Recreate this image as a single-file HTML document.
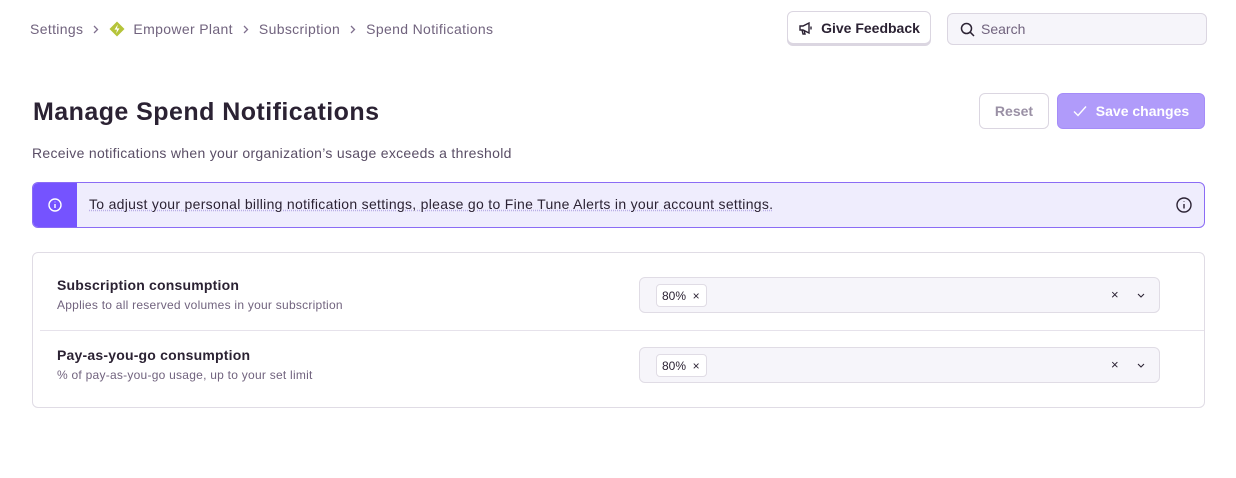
<!DOCTYPE html>
<html><head><style>
*{box-sizing:border-box;margin:0;padding:0}
body{width:1236px;height:478px;background:#fff;font-family:"Liberation Sans",sans-serif;color:#2b2233;position:relative;overflow:hidden}
.abs{position:absolute}
.bc{left:30px;top:20px;font-size:14px;color:#71637e;display:flex;align-items:center;height:18px;letter-spacing:0.35px}
.bc svg.c{margin:0 10px}
.btn{position:absolute;border:1px solid #dbd6e1;border-radius:6px;background:#fff;display:flex;align-items:center;justify-content:center;font-size:14px;font-weight:bold}
.sel{position:absolute;left:639px;width:521px;height:36px;border:1px solid #e0dce5;border-radius:6px;background:#f6f5fa}
.chip{position:absolute;left:16px;top:6px;width:51px;height:23px;border:1px solid #e0dce5;border-radius:4px;background:#fff;font-size:12px;padding:4px 0 0 5px;color:#2b2233}
.lbl{position:absolute;left:57px;font-size:14px;font-weight:bold;color:#2b2233;letter-spacing:0.2px}
.sub{position:absolute;left:57px;font-size:12px;color:#71637e;letter-spacing:0.25px}
</style></head><body>
<div class="abs bc">Settings<svg class="c" width="6" height="9" viewBox="0 0 6 9" fill="none" stroke="#80708f" stroke-width="1.3"><path d="M1 1l3.5 3.5L1 8"/></svg>
<svg width="16" height="16" viewBox="0 0 16 16" style="margin-right:8px"><path d="M8 0.5L15.5 8L8 15.5L0.5 8Z" fill="#b5c43a"/><path d="M8.8 3.5L5.5 8.6H8L7.2 12.5L10.5 7.4H8Z" fill="#fff"/></svg>Empower Plant<svg class="c" width="6" height="9" viewBox="0 0 6 9" fill="none" stroke="#80708f" stroke-width="1.3"><path d="M1 1l3.5 3.5L1 8"/></svg>Subscription<svg class="c" width="6" height="9" viewBox="0 0 6 9" fill="none" stroke="#80708f" stroke-width="1.3"><path d="M1 1l3.5 3.5L1 8"/></svg>Spend Notifications</div>

<div class="btn" style="left:787px;top:11px;width:144px;height:33px;box-shadow:0 2px 0 #dbd6e1;color:#2b2233">
<svg width="16" height="16" viewBox="0 0 16 16" style="margin-right:7px" fill="none" stroke="#2b2233" stroke-width="1.4"><path d="M2 6h3l6-3v10l-6-3H2z"/><path d="M4 10l1 4h2l-1-4"/><path d="M13 6.5v3"/></svg>Give Feedback</div>
<div class="abs" style="left:947px;top:13px;width:260px;height:32px;border:1px solid #dbd6e1;border-radius:6px;background:#f6f5fa;font-size:14px;color:#71637e;padding:7px 0 0 33px">Search
<svg class="abs" style="left:12px;top:8px" width="15" height="15" viewBox="0 0 15 15" fill="none" stroke="#2b2233" stroke-width="1.5"><circle cx="6.5" cy="6.5" r="5"/><path d="M10.2 10.2L14 14"/></svg></div>

<div class="abs" style="left:33px;top:98px;font-size:25px;font-weight:bold;color:#2b2233;letter-spacing:0.45px">Manage Spend Notifications</div>
<div class="btn" style="left:979px;top:93px;width:70px;height:36px;color:#9a90a5;font-weight:bold">Reset</div>
<div class="btn" style="left:1057px;top:93px;width:148px;height:36px;background:#b09bfa;border-color:#a58cf8;color:#fff">
<svg width="14" height="12" viewBox="0 0 14 12" style="margin-right:9px" fill="none" stroke="#fff" stroke-width="1.4"><path d="M1 6.5l4 4L13 1.5"/></svg>Save changes</div>
<div class="abs" style="left:32px;top:145px;font-size:14px;color:#5a4e66;letter-spacing:0.3px">Receive notifications when your organization’s usage exceeds a threshold</div>

<div class="abs" style="left:32px;top:182px;width:1173px;height:46px;border:1px solid #8b6cf5;border-radius:6px;background:#efedfd;overflow:hidden">
<div class="abs" style="left:0;top:0;width:44px;height:46px;background:#7553ff"></div>
<svg class="abs" style="left:15px;top:15px" width="14" height="14" viewBox="0 0 14 14" fill="none" stroke="#fff" stroke-width="1.4"><circle cx="7" cy="7" r="6"/><path d="M7 6v4M7 3.8v.4"/></svg>
<div class="abs" style="left:56px;top:13px;font-size:14px;color:#2b2233;letter-spacing:0.3px;text-decoration:underline dotted #b9aee6">To adjust your personal billing notification settings, please go to Fine Tune Alerts in your account settings.</div>
<svg class="abs" style="left:1143px;top:14px" width="16" height="16" viewBox="0 0 16 16" fill="none" stroke="#2b2233" stroke-width="1.4"><circle cx="8" cy="8" r="7"/><path d="M8 7v4.5M8 4.5v.5"/></svg>
</div>

<div class="abs" style="left:32px;top:252px;width:1173px;height:156px;border:1px solid #e0dce5;border-radius:6px"></div>
<div class="abs" style="left:40px;top:330px;width:1164px;height:1px;background:#e6e2eb"></div>
<div class="lbl" style="top:277px">Subscription consumption</div>
<div class="sub" style="top:298px">Applies to all reserved volumes in your subscription</div>
<div class="lbl" style="top:347px">Pay-as-you-go consumption</div>
<div class="sub" style="top:368px">% of pay-as-you-go usage, up to your set limit</div>

<div class="sel" style="top:277px"><div class="chip">80% &nbsp;×</div><span class="abs" style="left:471px;top:9px;font-size:13px">×</span><svg class="abs" style="left:497px;top:15px" width="8" height="5" viewBox="0 0 8 5" fill="none" stroke="#2b2233" stroke-width="1.1"><path d="M1 1l3 3 3-3"/></svg></div>
<div class="sel" style="top:347px"><div class="chip">80% &nbsp;×</div><span class="abs" style="left:471px;top:9px;font-size:13px">×</span><svg class="abs" style="left:497px;top:15px" width="8" height="5" viewBox="0 0 8 5" fill="none" stroke="#2b2233" stroke-width="1.1"><path d="M1 1l3 3 3-3"/></svg></div>
</body></html>
